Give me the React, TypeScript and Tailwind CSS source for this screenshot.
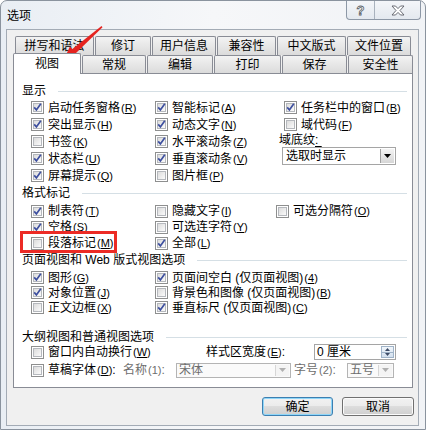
import type { ReactNode } from "react";

const Key = ({ k }: { k: string }) => (
  <span className="ml-[1px] text-[11px]">
    (<span className="underline underline-offset-1">{k}</span>)
  </span>
);

const Box = ({ checked }: { checked?: boolean }) => (
  <span className="flex h-[13px] w-[13px] shrink-0 items-center justify-center border border-[#8e8f8f] bg-white">
    <span className="flex h-[9px] w-[9px] items-center justify-center border border-[#b5b8bd] bg-gradient-to-br from-[#dcdcdc] to-[#fbfbfb]">
      {checked && (
        <svg width="9" height="9" viewBox="0 0 9 9" className="overflow-visible">
          <path d="M1.2 4.4 L3.4 6.9 L7.8 0.8" fill="none" stroke="#3d4f9f" strokeWidth="1.7" />
        </svg>
      )}
    </span>
  </span>
);

const Check = ({
  label,
  k,
  checked,
  tail,
  className = "",
}: {
  label: string;
  k: string;
  checked?: boolean;
  tail?: string;
  className?: string;
}) => (
  <div className={`flex items-center ${className}`}>
    <Box checked={checked} />
    <span className="ml-[4px] whitespace-nowrap leading-none">
      {label}
      <Key k={k} />
      {tail}
    </span>
  </div>
);

const Header = ({ children, className = "" }: { children: ReactNode; className?: string }) => (
  <div className={`flex items-center pl-[8px] pr-[5px] ${className}`}>
    <span className="whitespace-nowrap leading-none">{children}</span>
    <span className="ml-[12px] h-px flex-1 bg-[#d5dfe5]" />
  </div>
);

const Arrow = ({ disabled }: { disabled?: boolean }) => (
  <span
    className={`flex h-full w-[14px] shrink-0 items-center justify-center border-l ${
      disabled
        ? "border-[#d6d6d6] bg-[#f4f4f4]"
        : "border-[#a0a0a0] bg-gradient-to-b from-[#f4f4f4] to-[#d6d6d6]"
    }`}
  >
    <svg width="7" height="4" viewBox="0 0 7 4">
      <path d="M0 0 H7 L3.5 4 Z" fill={disabled ? "#b0b0b0" : "#000"} />
    </svg>
  </span>
);

const Tab = ({ label, w, h }: { label: string; w: string; h: string }) => (
  <div
    className={`${w} ${h} flex shrink-0 items-center justify-center rounded-t-[2px] border border-b-0 border-[#898c95] bg-gradient-to-b from-[#f3f3f3] to-[#dbdbdb] leading-none`}
  >
    {label}
  </div>
);

export default function App() {
  return (
    <div className="relative h-[430px] w-[429px] overflow-hidden bg-white font-['Liberation_Sans','Noto_Sans_CJK_SC',sans-serif] text-[12px] text-black">
      <div className="flex h-[430px] w-[426px] flex-col rounded-t-[7px] border border-[#8a939e] bg-gradient-to-r from-[#e9eef4] via-[#f6f7f9] to-[#f1f3f6]">
        {/* title bar */}
        <div className="flex h-[28px] items-start">
          <span className="ml-[6px] mt-[8px] leading-[14px]">选项</span>
          <div className="ml-auto mr-[4px] flex h-[19px] rounded-b-[4px] border border-t-0 border-[#8d98a6] bg-gradient-to-b from-[#f4f6f9] to-[#e4e9ef]">
            <div className="flex w-[28px] items-center justify-center border-r border-[#a9b2bd] text-[13px] font-bold leading-none text-white [-webkit-text-stroke:0.8px_#5b5f66]">
              ?
            </div>
            <div className="flex w-[45px] items-center justify-center">
              <svg width="14" height="11" viewBox="0 0 14 11">
                <path
                  d="M1 1 H4.5 L7 3.6 L9.5 1 H13 L9 5.5 L13 10 H9.5 L7 7.4 L4.5 10 H1 L5 5.5 Z"
                  fill="#fff"
                  stroke="#5b5f66"
                  strokeWidth="0.9"
                />
              </svg>
            </div>
          </div>
        </div>

        {/* client area */}
        <div className="ml-[5px] flex h-[397px] w-[413px] flex-col border border-[#a3abb5] bg-[#f0f0f0]">
          {/* tab row 1 */}
          <div className="ml-[8px] mt-[6px] flex h-[19px] gap-[1px]">
            <Tab label="拼写和语法" w="w-[79px]" h="h-[19px]" />
            <Tab label="修订" w="w-[56px]" h="h-[19px]" />
            <Tab label="用户信息" w="w-[64px]" h="h-[19px]" />
            <Tab label="兼容性" w="w-[59px]" h="h-[19px]" />
            <Tab label="中文版式" w="w-[69px]" h="h-[19px]" />
            <Tab label="文件位置" w="w-[64px]" h="h-[19px]" />
          </div>
          {/* tab row 2 */}
          <div className="ml-[6px] flex h-[18px] items-end gap-[1px]">
            <div className="relative z-10 -mb-px flex h-[21px] w-[68px] shrink-0 items-center justify-center rounded-t-[2px] border border-b-0 border-[#898c95] bg-white leading-none">
              视图
            </div>
            <Tab label="常规" w="w-[64px]" h="h-[18px]" />
            <Tab label="编辑" w="w-[66px]" h="h-[18px]" />
            <Tab label="打印" w="w-[67px]" h="h-[18px]" />
            <Tab label="保存" w="w-[65px]" h="h-[18px]" />
            <Tab label="安全性" w="w-[65px]" h="h-[18px]" />
          </div>

          {/* tab panel */}
          <div className="ml-[6px] flex h-[315px] w-[400px] flex-col border border-[#898c95] bg-white">
            <Header className="mt-[9px] h-[16px]">显示</Header>
            <div className="flex pl-[17px]">
              <div className="flex w-[124px] flex-col">
                <Check className="h-[17px]" label="启动任务窗格" k="R" checked />
                <Check className="h-[17px]" label="突出显示" k="H" checked />
                <Check className="h-[17px]" label="书签" k="K" />
                <Check className="h-[17px]" label="状态栏" k="U" checked />
                <Check className="h-[17px]" label="屏幕提示" k="Q" checked />
              </div>
              <div className="flex w-[129px] flex-col">
                <Check className="h-[17px]" label="智能标记" k="A" checked />
                <Check className="h-[17px]" label="动态文字" k="N" checked />
                <Check className="h-[17px]" label="水平滚动条" k="Z" checked />
                <Check className="h-[17px]" label="垂直滚动条" k="V" checked />
                <Check className="h-[17px]" label="图片框" k="P" />
              </div>
              <div className="flex flex-col">
                <Check className="h-[17px]" label="任务栏中的窗口" k="B" checked />
                <Check className="h-[17px]" label="域代码" k="F" />
                <div className="-ml-[5px] flex h-[14px] items-center leading-none">
                  域底纹<span className="underline underline-offset-2">:&nbsp;</span>
                </div>
                <div className="-ml-[2px] flex h-[18px] w-[114px] items-stretch border border-[#a5a5a5] bg-white p-[1px]">
                  <span className="flex flex-1 items-center pl-[2px] leading-none">选取时显示</span>
                  <Arrow />
                </div>
              </div>
            </div>

            <Header className="mt-[1px] h-[16px]">格式标记</Header>
            <div className="mt-[2px] flex pl-[17px]">
              <div className="flex w-[124px] flex-col">
                <Check className="h-[16px]" label="制表符" k="T" checked />
                <Check className="h-[16px]" label="空格" k="S" checked />
                <Check className="h-[16px]" label="段落标记" k="M" />
              </div>
              <div className="flex w-[121px] flex-col">
                <Check className="h-[16px]" label="隐藏文字" k="I" />
                <Check className="h-[16px]" label="可选连字符" k="Y" />
                <Check className="h-[16px]" label="全部" k="L" checked />
              </div>
              <div className="flex flex-col">
                <Check className="h-[16px]" label="可选分隔符" k="O" />
              </div>
            </div>

            <Header className="mt-[1px] h-[16px]">页面视图和 Web 版式视图选项</Header>
            <div className="mt-[2px] flex pl-[17px]">
              <div className="flex w-[124px] flex-col">
                <Check className="h-[15px]" label="图形" k="G" checked />
                <Check className="h-[15px]" label="对象位置" k="J" checked />
                <Check className="h-[15px]" label="正文边框" k="X" />
              </div>
              <div className="flex flex-col">
                <Check className="h-[15px]" label="页面间空白 (仅页面视图)" k="4" checked />
                <Check className="h-[15px]" label="背景色和图像 (仅页面视图)" k="B" />
                <Check className="h-[15px]" label="垂直标尺 (仅页面视图)" k="C" checked />
              </div>
            </div>

            <Header className="mt-[15px] h-[14px]">大纲视图和普通视图选项</Header>
            <div className="flex h-[16px] items-center pl-[17px]">
              <Check className="w-[175px]" label="窗口内自动换行" k="W" />
              <span className="w-[108px] whitespace-nowrap leading-none">
                样式区宽度<Key k="E" />:
              </span>
              <div className="flex h-[16px] w-[82px] items-stretch border border-[#a5a5a5] bg-white">
                <span className="flex flex-1 items-center pl-[2px] leading-none">0 厘米</span>
                <span className="m-[1px] flex w-[13px] flex-col border border-[#9fb3c8] bg-gradient-to-b from-[#f1f6fb] to-[#d3e0ee]">
                  <span className="flex flex-1 items-center justify-center border-b border-[#9fb3c8]">
                    <svg width="5" height="3" viewBox="0 0 5 3">
                      <path d="M0 3 H5 L2.5 0 Z" fill="#3d4b66" />
                    </svg>
                  </span>
                  <span className="flex flex-1 items-center justify-center">
                    <svg width="5" height="3" viewBox="0 0 5 3">
                      <path d="M0 0 H5 L2.5 3 Z" fill="#3d4b66" />
                    </svg>
                  </span>
                </span>
              </div>
            </div>
            <div className="flex h-[20px] items-center pl-[17px]">
              <Check className="w-[92px]" label="草稿字体" k="D" tail=":" />
              <span className="w-[53px] whitespace-nowrap leading-none text-[#6d6d6d]">
                名称<span className="ml-[1px] text-[11px]">(1)</span>:
              </span>
              <div className="flex h-[15px] w-[115px] items-stretch border border-[#b4b4b4] bg-[#fafafa] p-[1px]">
                <span className="flex flex-1 items-center pl-[1px] leading-none text-[#6d6d6d]">宋体</span>
                <Arrow disabled />
              </div>
              <span className="ml-[3px] w-[53px] whitespace-nowrap leading-none text-[#6d6d6d]">
                字号<span className="ml-[1px] text-[11px]">(2)</span>:
              </span>
              <div className="flex h-[15px] w-[47px] items-stretch border border-[#b4b4b4] bg-[#fafafa] p-[1px]">
                <span className="flex flex-1 items-center pl-[1px] leading-none text-[#6d6d6d]">五号</span>
                <Arrow disabled />
              </div>
            </div>
          </div>

          {/* buttons */}
          <div className="mr-[4px] mt-[9px] flex justify-end gap-[9px]">
            <button className="flex h-[19px] w-[71px] items-center justify-center rounded-[3px] border border-[#3c7fb1] bg-[linear-gradient(to_bottom,#f2f2f2_0%,#ebebeb_50%,#dddddd_50%,#cfcfcf_100%)] leading-none shadow-[inset_0_0_0_1px_#8fd6f8]">
              确定
            </button>
            <button className="flex h-[19px] w-[72px] items-center justify-center rounded-[3px] border border-[#707070] bg-[linear-gradient(to_bottom,#f2f2f2_0%,#ebebeb_50%,#dddddd_50%,#cfcfcf_100%)] leading-none shadow-[inset_0_0_0_1px_#fbfbfb]">
              取消
            </button>
          </div>
        </div>
      </div>

      {/* annotations */}
      <div className="pointer-events-none absolute left-[20px] top-[231px] h-[22px] w-[97px] border-[3px] border-[#ec2b25]" />
      <svg className="pointer-events-none absolute left-0 top-0" width="429" height="430" viewBox="0 0 429 430">
        <path d="M101.5 26 L102.5 27.2 L75.5 53.5 L71.8 49.6 Z" fill="#e5231f" />
        <path d="M63 61.5 L69.9 46.6 L77.7 54.6 Z" fill="#e5231f" />
      </svg>
    </div>
  );
}
